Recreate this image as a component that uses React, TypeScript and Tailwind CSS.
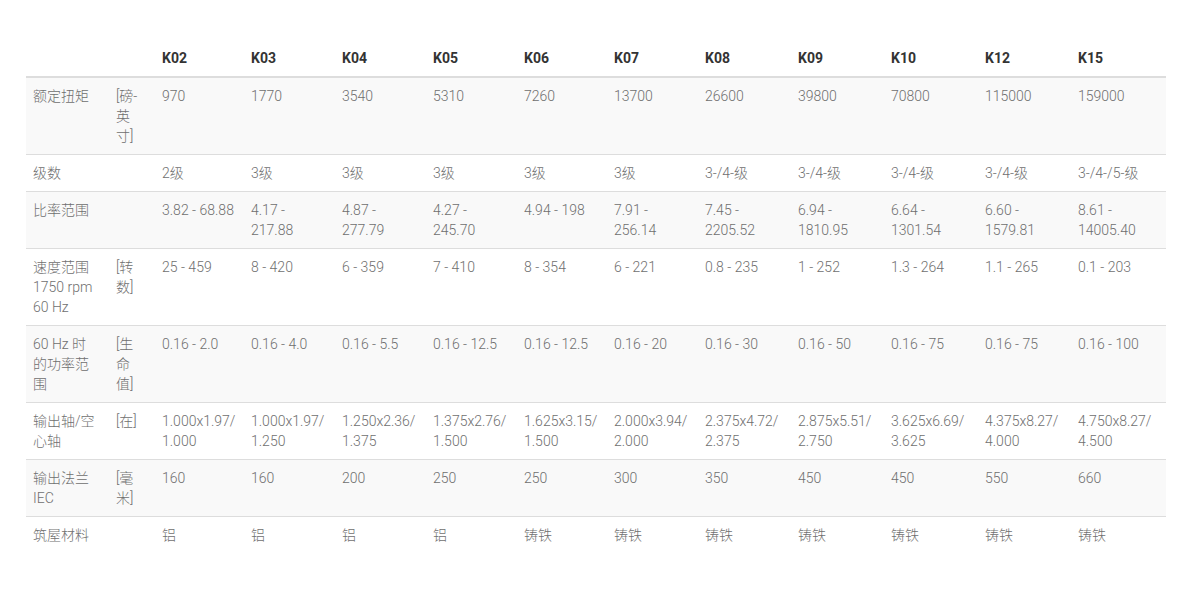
import React from "react";

const models = ["K02", "K03", "K04", "K05", "K06", "K07", "K08", "K09", "K10", "K12", "K15"];
const colWidths = [83, 46, 89, 91, 91, 91, 90, 91, 93, 93, 94, 93, 95];

type Row = { label: string; unit: string; values: string[] };

const rows: Row[] = [
  {
    label: "额定扭矩",
    unit: "[磅-英寸]",
    values: ["970", "1770", "3540", "5310", "7260", "13700", "26600", "39800", "70800", "115000", "159000"],
  },
  {
    label: "级数",
    unit: "",
    values: ["2级", "3级", "3级", "3级", "3级", "3级", "3-/4-级", "3-/4-级", "3-/4-级", "3-/4-级", "3-/4-/5-级"],
  },
  {
    label: "比率范围",
    unit: "",
    values: [
      "3.82 - 68.88",
      "4.17 - 217.88",
      "4.87 - 277.79",
      "4.27 - 245.70",
      "4.94 - 198",
      "7.91 - 256.14",
      "7.45 - 2205.52",
      "6.94 - 1810.95",
      "6.64 - 1301.54",
      "6.60 - 1579.81",
      "8.61 - 14005.40",
    ],
  },
  {
    label: "速度范围 1750 rpm 60 Hz",
    unit: "[转数]",
    values: ["25 - 459", "8 - 420", "6 - 359", "7 - 410", "8 - 354", "6 - 221", "0.8 - 235", "1 - 252", "1.3 - 264", "1.1 - 265", "0.1 - 203"],
  },
  {
    label: "60 Hz 时的功率范围",
    unit: "[生命值]",
    values: [
      "0.16 - 2.0",
      "0.16 - 4.0",
      "0.16 - 5.5",
      "0.16 - 12.5",
      "0.16 - 12.5",
      "0.16 - 20",
      "0.16 - 30",
      "0.16 - 50",
      "0.16 - 75",
      "0.16 - 75",
      "0.16 - 100",
    ],
  },
  {
    label: "输出轴/空心轴",
    unit: "[在]",
    values: [
      "1.000x1.97/\u200b1.000",
      "1.000x1.97/\u200b1.250",
      "1.250x2.36/\u200b1.375",
      "1.375x2.76/\u200b1.500",
      "1.625x3.15/\u200b1.500",
      "2.000x3.94/\u200b2.000",
      "2.375x4.72/\u200b2.375",
      "2.875x5.51/\u200b2.750",
      "3.625x6.69/\u200b3.625",
      "4.375x8.27/\u200b4.000",
      "4.750x8.27/\u200b4.500",
    ],
  },
  {
    label: "输出法兰 IEC",
    unit: "[毫米]",
    values: ["160", "160", "200", "250", "250", "300", "350", "450", "450", "550", "660"],
  },
  {
    label: "筑屋材料",
    unit: "",
    values: ["铝", "铝", "铝", "铝", "铸铁", "铸铁", "铸铁", "铸铁", "铸铁", "铸铁", "铸铁"],
  },
];

export default function App() {
  return (
    <div
      className="min-h-screen bg-white pl-[26px] pt-10"
      style={{ fontFamily: 'Roboto, "Noto Sans CJK SC", sans-serif' }}
    >
      <table className="w-[1140px] table-fixed border-collapse text-[14px] leading-5">
        <colgroup>
          {colWidths.map((w, i) => (
            <col key={i} style={{ width: w }} />
          ))}
        </colgroup>
        <thead>
          <tr className="border-b-2 border-[#dddddd]">
            <th className="py-2 pl-[7px]" />
            <th className="py-2 pl-[7px]" />
            {models.map((m) => (
              <th key={m} className="py-2 pl-[7px] text-left font-bold text-[#333333]">
                {m}
              </th>
            ))}
          </tr>
        </thead>
        <tbody>
          {rows.map((row, i) => (
            <tr
              key={row.label}
              className={`${i % 2 === 0 ? "bg-[#f9f9f9]" : "bg-white"} ${
                i > 0 ? "border-t border-[#dddddd]" : ""
              } align-top font-light text-[#6f6f6f]`}
            >
              <td className="py-2 pl-[7px] pr-[11px]">{row.label}</td>
              <td className="py-2 pl-[7px] pr-[11px]">{row.unit}</td>
              {row.values.map((v, j) => (
                <td key={j} className="py-2 pl-[7px] pr-[5px]">
                  {v}
                </td>
              ))}
            </tr>
          ))}
        </tbody>
      </table>
    </div>
  );
}
